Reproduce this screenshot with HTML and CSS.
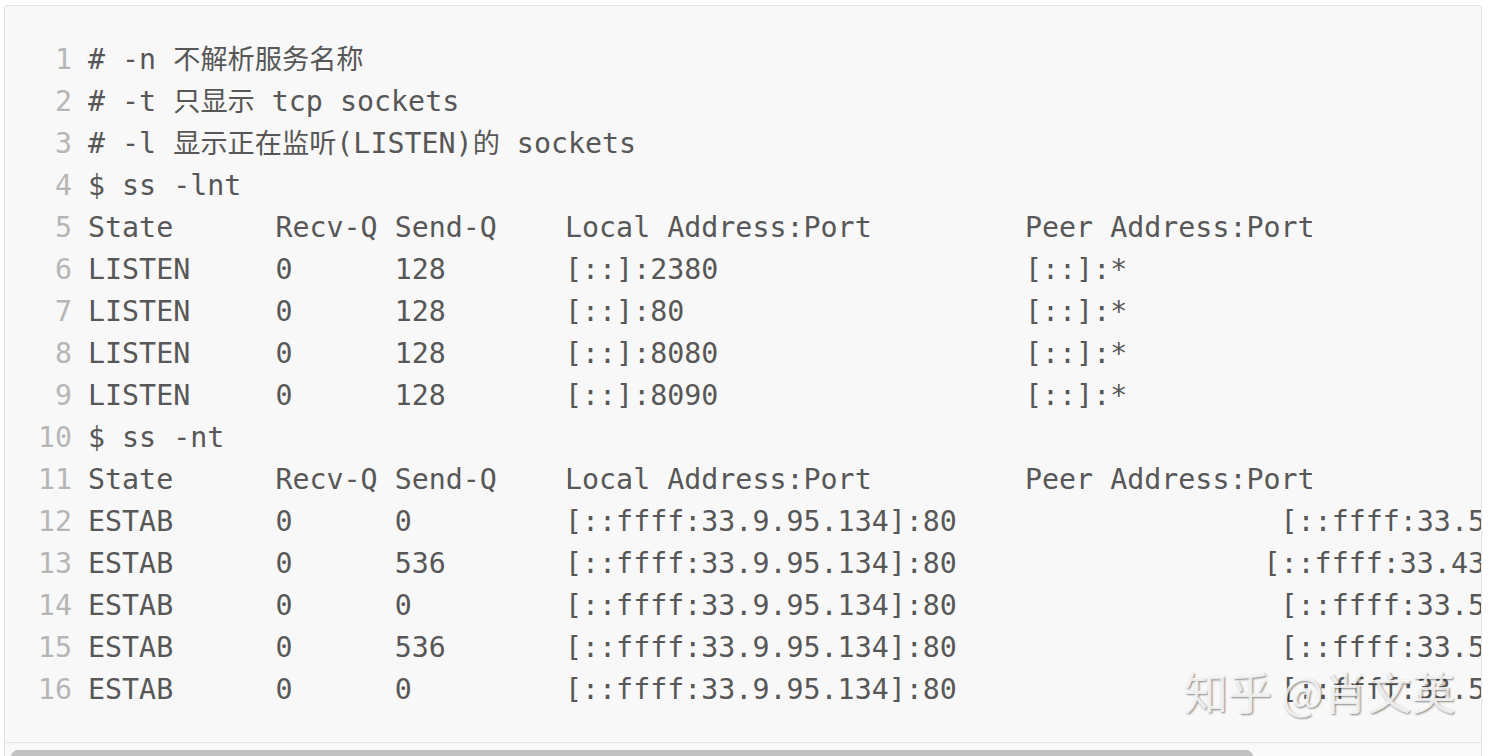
FILE: index.html
```html
<!DOCTYPE html>
<html lang="zh-CN">
<head>
<meta charset="utf-8">
<title>ss</title>
<link rel="stylesheet" href="styles.css">
</head>
<body>
<div class="block">
  <div class="code">
    <div class="row"><span class="ln">1</span><span class="src"># -n <span class="zh">不解析服务名称</span></span></div>
    <div class="row"><span class="ln">2</span><span class="src"># -t <span class="zh">只显示</span> tcp sockets</span></div>
    <div class="row"><span class="ln">3</span><span class="src"># -l <span class="zh">显示正在监听</span>(LISTEN)<span class="zh">的</span> sockets</span></div>
    <div class="row"><span class="ln">4</span><span class="src">$ ss -lnt</span></div>
    <div class="row"><span class="ln">5</span><span class="src">State      Recv-Q Send-Q    Local Address:Port         Peer Address:Port</span></div>
    <div class="row"><span class="ln">6</span><span class="src">LISTEN     0      128       [::]:2380                  [::]:*</span></div>
    <div class="row"><span class="ln">7</span><span class="src">LISTEN     0      128       [::]:80                    [::]:*</span></div>
    <div class="row"><span class="ln">8</span><span class="src">LISTEN     0      128       [::]:8080                  [::]:*</span></div>
    <div class="row"><span class="ln">9</span><span class="src">LISTEN     0      128       [::]:8090                  [::]:*</span></div>
    <div class="row"><span class="ln">10</span><span class="src">$ ss -nt</span></div>
    <div class="row"><span class="ln">11</span><span class="src">State      Recv-Q Send-Q    Local Address:Port         Peer Address:Port</span></div>
    <div class="row"><span class="ln">12</span><span class="src">ESTAB      0      0         [::ffff:33.9.95.134]:80                   [::ffff:33.51.103.162]:36266</span></div>
    <div class="row"><span class="ln">13</span><span class="src">ESTAB      0      536       [::ffff:33.9.95.134]:80                  [::ffff:33.43.108.211]:42837</span></div>
    <div class="row"><span class="ln">14</span><span class="src">ESTAB      0      0         [::ffff:33.9.95.134]:80                   [::ffff:33.51.103.226]:59238</span></div>
    <div class="row"><span class="ln">15</span><span class="src">ESTAB      0      536       [::ffff:33.9.95.134]:80                   [::ffff:33.51.104.40]:58310</span></div>
    <div class="row"><span class="ln">16</span><span class="src">ESTAB      0      0         [::ffff:33.9.95.134]:80                   [::ffff:33.51.103.162]:36268</span></div>
  </div>
  <div class="track"><div class="thumb"></div></div>
  <div class="watermark">知乎 @肖文英</div>
</div>
</body>
</html>
```

FILE: styles.css
```css
html, body {
  margin: 0;
  padding: 0;
  background: #ffffff;
}

body {
  height: 756px;
  overflow: hidden;
}

.block {
  position: relative;
  margin: 5px 18px 0 4px;
  border: 1px solid #e4e4e4;
  border-radius: 3px;
  background: #f8f8f8;
  overflow: hidden;
}

.code {
  padding: 33px 0 31px 0;
  overflow: hidden;
  font-family: "DejaVu Sans Mono", "Noto Sans CJK SC", monospace;
  font-size: 28.3px;
  line-height: 42px;
  color: #575757;
}

.row {
  display: flex;
  align-items: baseline;
  height: 42px;
  white-space: pre;
}

.ln {
  flex: none;
  width: 67px;
  margin-right: 16px;
  text-align: right;
  color: #b6b6b6;
}

.src {
  flex: none;
}

.zh {
  font-family: "Noto Sans CJK SC", sans-serif;
  font-size: 27.2px;
  line-height: 0;
}

.track {
  border-top: 1px solid #e6e6e6;
  padding: 7px 0 0 6px;
  background: #f9f9f9;
}

.thumb {
  width: 1242px;
  height: 14px;
  border-radius: 7px;
  background: #c1c1c1;
}

.watermark {
  position: absolute;
  left: 1179px;
  top: 657px;
  font-family: "Noto Sans CJK SC", "Noto Sans", sans-serif;
  font-size: 44px;
  line-height: 56px;
  color: rgba(255, 255, 255, 0.82);
  text-shadow: 1px 1px 2px rgba(0, 0, 0, 0.45);
  white-space: nowrap;
}
```
